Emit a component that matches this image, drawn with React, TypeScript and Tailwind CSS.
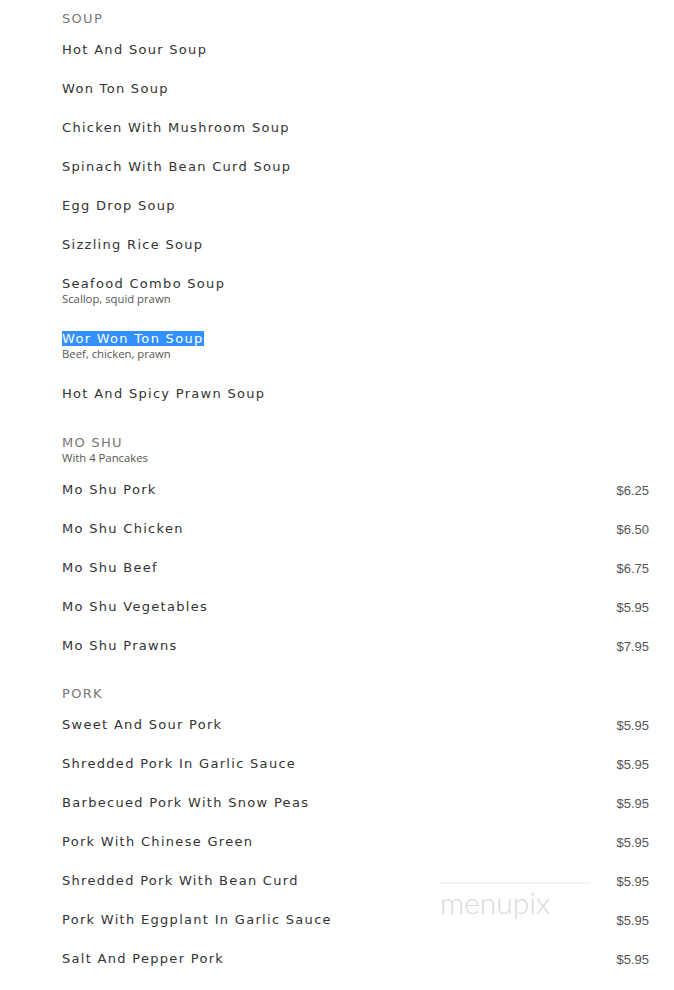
type Item = { name: string; desc?: string; price?: string; selected?: boolean };
type Section = { title: string; note?: string; items: Item[]; gap?: string };

const sections: Section[] = [
  {
    title: "SOUP",
    items: [
      { name: "Hot And Sour Soup" },
      { name: "Won Ton Soup" },
      { name: "Chicken With Mushroom Soup" },
      { name: "Spinach With Bean Curd Soup" },
      { name: "Egg Drop Soup" },
      { name: "Sizzling Rice Soup" },
      { name: "Seafood Combo Soup", desc: "Scallop, squid prawn" },
      { name: "Wor Won Ton Soup", desc: "Beef, chicken, prawn", selected: true },
      { name: "Hot And Spicy Prawn Soup" },
    ],
  },
  {
    title: "MO SHU",
    note: "With 4 Pancakes",
    gap: "mt-[22px]",
    items: [
      { name: "Mo Shu Pork", price: "$6.25" },
      { name: "Mo Shu Chicken", price: "$6.50" },
      { name: "Mo Shu Beef", price: "$6.75" },
      { name: "Mo Shu Vegetables", price: "$5.95" },
      { name: "Mo Shu Prawns", price: "$7.95" },
    ],
  },
  {
    title: "PORK",
    gap: "mt-[21px]",
    items: [
      { name: "Sweet And Sour Pork", price: "$5.95" },
      { name: "Shredded Pork In Garlic Sauce", price: "$5.95" },
      { name: "Barbecued Pork With Snow Peas", price: "$5.95" },
      { name: "Pork With Chinese Green", price: "$5.95" },
      { name: "Shredded Pork With Bean Curd", price: "$5.95" },
      { name: "Pork With Eggplant In Garlic Sauce", price: "$5.95" },
      { name: "Salt And Pepper Pork", price: "$5.95" },
    ],
  },
];

function Row({ item }: { item: Item }) {
  return (
    <div className="flex justify-between items-start py-[12px]">
      <div>
        <div className="text-[13px] leading-[15px] tracking-[1.3px] text-[#333]">
          <span className={item.selected ? "bg-[#3390ff] text-white" : ""}>{item.name}</span>
        </div>
        {item.desc && (
          <div className="text-[11.3px] leading-[16px] text-[#555] font-['Open_Sans',sans-serif]">
            {item.desc}
          </div>
        )}
      </div>
      {item.price && (
        <div className="pt-[2px] text-[13px] leading-[13px] text-[#555] font-['Liberation_Sans',sans-serif]">
          {item.price}
        </div>
      )}
    </div>
  );
}

export default function App() {
  return (
    <div className="relative min-h-screen bg-white pl-[62px] pr-[25px] pt-[11px] font-['DejaVu_Sans',sans-serif]">
      {sections.map((s) => (
        <div key={s.title} className={s.gap ?? ""}>
          <div className="mb-[4px]">
            <div className="text-[13px] leading-[15px] tracking-[1.3px] text-[#777]">{s.title}</div>
            {s.note && (
              <div className="text-[11.3px] leading-[16px] text-[#555] font-['Open_Sans',sans-serif]">
                {s.note}
              </div>
            )}
          </div>
          {s.items.map((it) => (
            <Row key={it.name} item={it} />
          ))}
        </div>
      ))}

      {/* watermark */}
      <div className="absolute left-[440px] top-[882px] pointer-events-none">
        <div className="w-[150px] h-[2px] bg-[#f4f4f4] mb-[2px]" />
        <div className="text-[30px] leading-[32px] font-light text-[#dadada] font-['Lato',sans-serif]">
          menupix
        </div>
      </div>
    </div>
  );
}
